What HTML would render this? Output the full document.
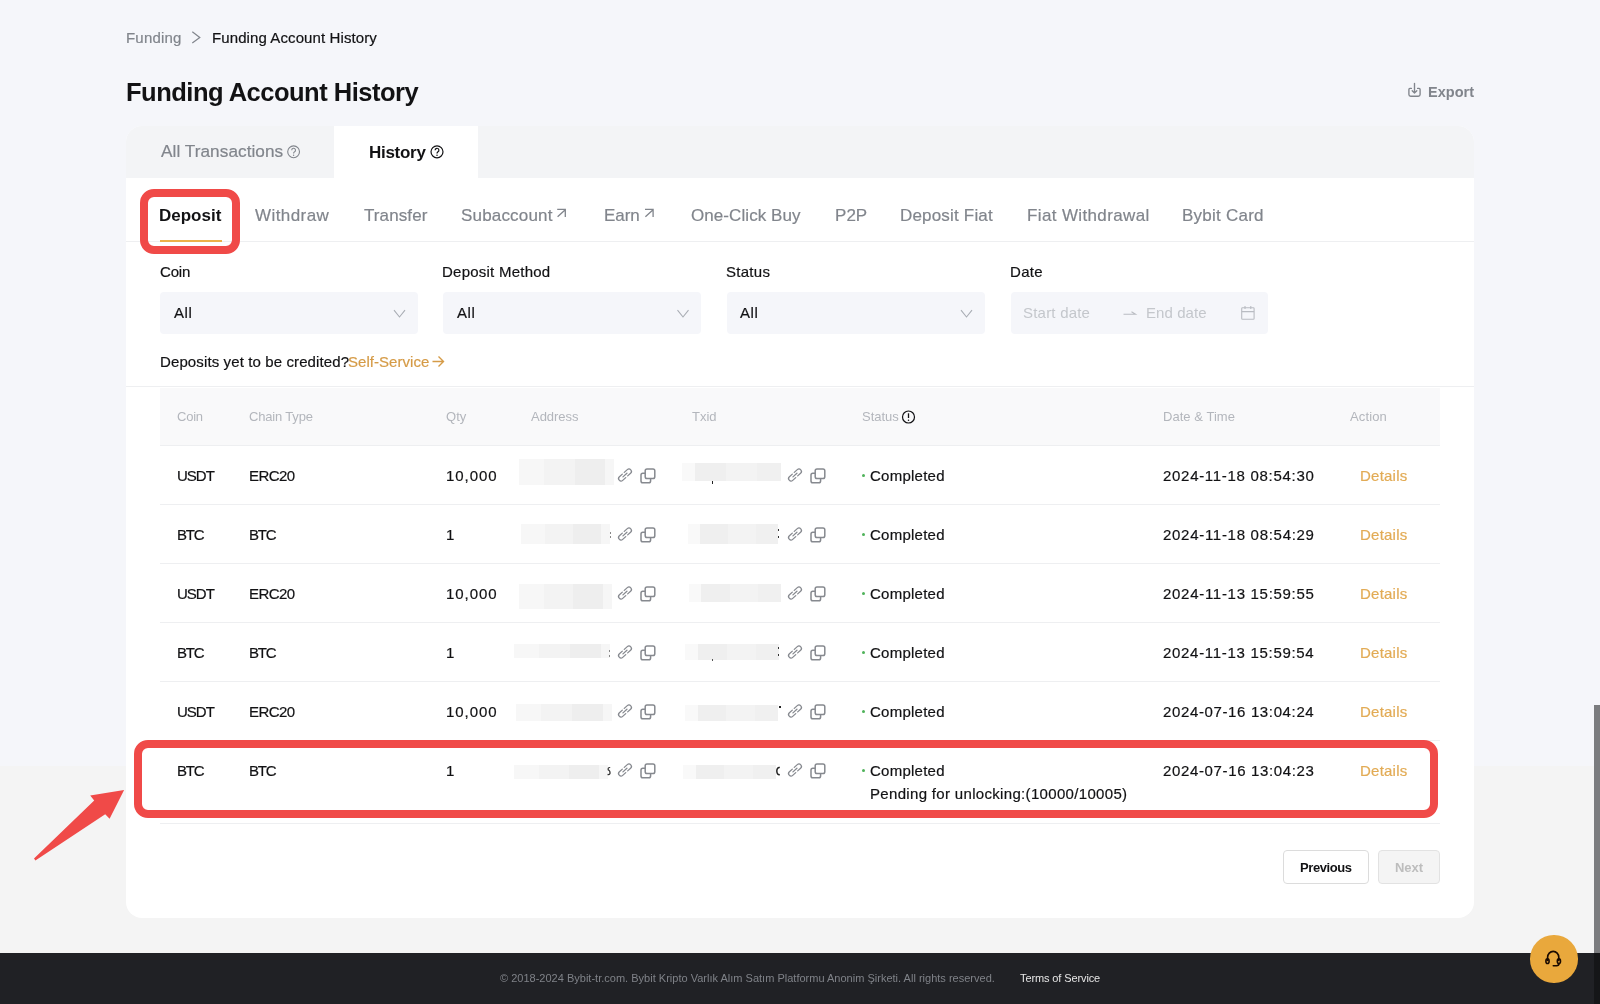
<!DOCTYPE html>
<html><head><meta charset="utf-8"><style>
*{margin:0;padding:0;box-sizing:border-box}
html,body{width:1600px;height:1004px;overflow:hidden}
body{position:relative;background:#f5f6fa;font-family:"Liberation Sans", sans-serif}
.t{position:absolute;white-space:nowrap;font-family:"Liberation Sans", sans-serif;-webkit-font-smoothing:antialiased}
body>*{will-change:transform}
.ic{position:absolute;overflow:visible}
.bl{position:absolute}
.hl{position:absolute;height:1px;background:#eeeff1}
.dot{position:absolute;width:3.4px;height:3.4px;border-radius:50%;background:#4fb25a}
</style></head><body>
<div style="position:absolute;left:0;top:766px;width:1600px;height:187px;background:#f4f4f4"></div>
<!-- card -->
<div style="position:absolute;left:126px;top:126px;width:1348px;height:792px;background:#fff;border-radius:16px;overflow:hidden">
  <div style="position:absolute;left:0;top:0;width:1348px;height:52px;background:#f3f4f6"></div>
  <div style="position:absolute;left:208px;top:0;width:144px;height:52px;background:#fff"></div>
</div>
<div class="hl" style="left:126px;width:1348px;top:241px;background:#eeeff1"></div>
<div style="position:absolute;left:160px;top:240px;width:61.5px;height:2px;background:#ecb14a"></div>
<!-- selects -->
<div style="position:absolute;left:160px;top:292px;width:258px;height:42px;background:#f5f6fa;border-radius:4px"></div>
<div style="position:absolute;left:443px;top:292px;width:258px;height:42px;background:#f5f6fa;border-radius:4px"></div>
<div style="position:absolute;left:727px;top:292px;width:258px;height:42px;background:#f5f6fa;border-radius:4px"></div>
<div style="position:absolute;left:1011px;top:292px;width:257px;height:42px;background:#f5f6fa;border-radius:4px"></div>
<svg class="ic" style="left:0;top:0" width="1600" height="1004" viewBox="0 0 1600 1004">
  <g fill="none" stroke="#a9adb4" stroke-width="1.1">
    <path d="M394 310.2 L399.5 317 L405 310.2"/><path d="M677.5 310.2 L683 317 L688.5 310.2"/><path d="M961 310.2 L966.5 317 L972 310.2"/>
  </g>
  <g fill="none" stroke="#b9bcc2" stroke-width="1.1">
    <path d="M1123.5 314.3 H1135.5 L1131.5 311.8"/>
    <rect x="1241.7" y="307.8" width="12.4" height="11.5" rx="0.8"/><path d="M1241.7 311.6 H1254.1 M1245 306 V309 M1250.8 306 V309"/>
  </g>
  <!-- breadcrumb chevron -->
  <path d="M192.3 31.8 L199.8 37.4 L192.3 43" fill="none" stroke="#81858c" stroke-width="1.2"/>
  <!-- export icon -->
  <g fill="none" stroke="#81858c" stroke-width="1.35" stroke-linecap="round" stroke-linejoin="round">
    <path d="M1411.4 88.4 H1409.9 A1 1 0 0 0 1408.9 89.4 V94.4 A1.8 1.8 0 0 0 1410.7 96.2 H1418.3 A1.8 1.8 0 0 0 1420.1 94.4 V89.4 A1 1 0 0 0 1419.1 88.4 H1417.6"/>
    <path d="M1414.5 83.3 V93 M1412.2 90.7 L1414.5 93 L1416.8 90.7"/>
  </g>
  <!-- question icons -->
  <g fill="none" stroke="#81858c" stroke-width="1.1"><circle cx="293.6" cy="151.8" r="5.9"/><path d="M291.7 150.2 A1.9 1.9 0 1 1 294.4 151.9 Q293.6 152.4 293.6 153.4"/></g>
  <circle cx="293.6" cy="155.3" r="0.7" fill="#81858c"/>
  <g fill="none" stroke="#121214" stroke-width="1.2"><circle cx="437" cy="151.8" r="6"/><path d="M435.1 150.2 A1.9 1.9 0 1 1 437.8 151.9 Q437 152.4 437 153.4"/></g>
  <circle cx="437" cy="155.3" r="0.75" fill="#121214"/>
  <!-- external arrows -->
  <g fill="none" stroke="#81858c" stroke-width="1.3"><path d="M557.6 216.8 L565 209.9 M557.2 209.3 H565.3 V217"/><path d="M645.4 216.8 L652.8 209.9 M645 209.3 H653.1 V217"/></g>
  <!-- self service arrow -->
  <g fill="none" stroke="#d59b47" stroke-width="1.4"><path d="M432.5 361.5 H443 M438.5 356.5 L443.5 361.5 L438.5 366.5"/></g>
</svg>
<div class="hl" style="left:126px;width:1348px;top:386px;background:#eeeff1"></div>
<!-- table header -->
<div style="position:absolute;left:160px;top:388px;width:1280px;height:58px;background:#f9f9fa;border-bottom:1px solid #eeeff1"></div>
<div class="hl" style="left:160px;width:1280px;top:504px"></div><div class="hl" style="left:160px;width:1280px;top:563px"></div><div class="hl" style="left:160px;width:1280px;top:622px"></div><div class="hl" style="left:160px;width:1280px;top:681px"></div><div class="hl" style="left:160px;width:1280px;top:740px"></div><div class="hl" style="left:160px;width:1280px;top:823px"></div>
<svg class="ic" style="left:0;top:0" width="1600" height="1004">  <!-- status info icon -->
  <g fill="none" stroke="#121214" stroke-width="1.2"><circle cx="908.5" cy="417" r="6"/></g>
  <path d="M908.5 413.3 V418" stroke="#121214" stroke-width="1.3"/><circle cx="908.5" cy="420.2" r="0.75" fill="#121214"/>
</svg>
<div class="bl" style="left:519px;top:459px;width:25px;height:26px;background:#f7f7f7"></div>
<div class="bl" style="left:544px;top:459px;width:31px;height:26px;background:#f3f3f3"></div>
<div class="bl" style="left:575px;top:459px;width:30px;height:26px;background:#eeeeee"></div>
<div class="bl" style="left:605px;top:459px;width:9px;height:26px;background:#f6f6f6"></div><div class="bl" style="left:682px;top:463px;width:13px;height:18px;background:#f9f9f9"></div>
<div class="bl" style="left:695px;top:463px;width:31px;height:18px;background:#efefef"></div>
<div class="bl" style="left:726px;top:463px;width:31px;height:18px;background:#f3f3f3"></div>
<div class="bl" style="left:757px;top:463px;width:24px;height:18px;background:#f0f0f0"></div><div class="bl" style="left:521px;top:524px;width:24px;height:20px;background:#f7f7f7"></div>
<div class="bl" style="left:545px;top:524px;width:28px;height:20px;background:#f3f3f3"></div>
<div class="bl" style="left:573px;top:524px;width:28px;height:20px;background:#eeeeee"></div>
<div class="bl" style="left:601px;top:524px;width:9px;height:20px;background:#f6f6f6"></div><div class="bl" style="left:688px;top:524px;width:12px;height:20px;background:#f9f9f9"></div>
<div class="bl" style="left:700px;top:524px;width:28px;height:20px;background:#efefef"></div>
<div class="bl" style="left:728px;top:524px;width:28px;height:20px;background:#f3f3f3"></div>
<div class="bl" style="left:756px;top:524px;width:22px;height:20px;background:#f0f0f0"></div><div class="bl" style="left:519px;top:584px;width:25px;height:25px;background:#f7f7f7"></div>
<div class="bl" style="left:544px;top:584px;width:29px;height:25px;background:#f3f3f3"></div>
<div class="bl" style="left:573px;top:584px;width:30px;height:25px;background:#eeeeee"></div>
<div class="bl" style="left:603px;top:584px;width:9px;height:25px;background:#f6f6f6"></div><div class="bl" style="left:689px;top:584px;width:12px;height:18px;background:#f9f9f9"></div>
<div class="bl" style="left:701px;top:584px;width:29px;height:18px;background:#efefef"></div>
<div class="bl" style="left:730px;top:584px;width:28px;height:18px;background:#f3f3f3"></div>
<div class="bl" style="left:758px;top:584px;width:23px;height:18px;background:#f0f0f0"></div><div class="bl" style="left:514px;top:644px;width:25px;height:14px;background:#f7f7f7"></div>
<div class="bl" style="left:539px;top:644px;width:31px;height:14px;background:#f3f3f3"></div>
<div class="bl" style="left:570px;top:644px;width:31px;height:14px;background:#eeeeee"></div>
<div class="bl" style="left:601px;top:644px;width:9px;height:14px;background:#f6f6f6"></div><div class="bl" style="left:685px;top:644px;width:13px;height:16px;background:#f9f9f9"></div>
<div class="bl" style="left:698px;top:644px;width:29px;height:16px;background:#efefef"></div>
<div class="bl" style="left:727px;top:644px;width:29px;height:16px;background:#f3f3f3"></div>
<div class="bl" style="left:756px;top:644px;width:23px;height:16px;background:#f0f0f0"></div><div class="bl" style="left:516px;top:704px;width:25px;height:17px;background:#f7f7f7"></div>
<div class="bl" style="left:541px;top:704px;width:31px;height:17px;background:#f3f3f3"></div>
<div class="bl" style="left:572px;top:704px;width:31px;height:17px;background:#eeeeee"></div>
<div class="bl" style="left:603px;top:704px;width:9px;height:17px;background:#f6f6f6"></div><div class="bl" style="left:685px;top:705px;width:13px;height:16px;background:#f9f9f9"></div>
<div class="bl" style="left:698px;top:705px;width:28px;height:16px;background:#efefef"></div>
<div class="bl" style="left:726px;top:705px;width:29px;height:16px;background:#f3f3f3"></div>
<div class="bl" style="left:755px;top:705px;width:23px;height:16px;background:#f0f0f0"></div><div class="bl" style="left:514px;top:765px;width:25px;height:14px;background:#f7f7f7"></div>
<div class="bl" style="left:539px;top:765px;width:30px;height:14px;background:#f3f3f3"></div>
<div class="bl" style="left:569px;top:765px;width:30px;height:14px;background:#eeeeee"></div>
<div class="bl" style="left:599px;top:765px;width:9px;height:14px;background:#f6f6f6"></div><div class="bl" style="left:683px;top:765px;width:13px;height:14px;background:#f9f9f9"></div>
<div class="bl" style="left:696px;top:765px;width:28px;height:14px;background:#efefef"></div>
<div class="bl" style="left:724px;top:765px;width:29px;height:14px;background:#f3f3f3"></div>
<div class="bl" style="left:753px;top:765px;width:23px;height:14px;background:#f0f0f0"></div>
<svg class="ic" style="left:617.05px;top:467.3px" width="16" height="16" viewBox="-8 -8 16 16"><g fill="none" stroke="#86898f" stroke-width="1.3" stroke-linecap="round" transform="rotate(-42)">
<path d="M1.2 -2.45 H5.3 A2.45 2.45 0 0 1 5.3 2.45 H1.4"/><path d="M-1.2 2.45 H-5.3 A2.45 2.45 0 0 1 -5.3 -2.45 H-1.4"/><path d="M-2.8 0 H2.6"/></g></svg><svg class="ic" style="left:639.5px;top:467.5px" width="16" height="16" viewBox="0 0 16 16"><g fill="none" stroke="#86898f" stroke-width="1.5" stroke-linejoin="round">
<rect x="5.2" y="0.9" width="9.6" height="9.6" rx="1.8"/><path d="M5.2 5.2 H2.8 A1.8 1.8 0 0 0 1 7 V13 A1.8 1.8 0 0 0 2.8 14.8 H8.8 A1.8 1.8 0 0 0 10.6 13 V10.5"/></g></svg><svg class="ic" style="left:787.1px;top:467.3px" width="16" height="16" viewBox="-8 -8 16 16"><g fill="none" stroke="#86898f" stroke-width="1.3" stroke-linecap="round" transform="rotate(-42)">
<path d="M1.2 -2.45 H5.3 A2.45 2.45 0 0 1 5.3 2.45 H1.4"/><path d="M-1.2 2.45 H-5.3 A2.45 2.45 0 0 1 -5.3 -2.45 H-1.4"/><path d="M-2.8 0 H2.6"/></g></svg><svg class="ic" style="left:810px;top:467.5px" width="16" height="16" viewBox="0 0 16 16"><g fill="none" stroke="#86898f" stroke-width="1.5" stroke-linejoin="round">
<rect x="5.2" y="0.9" width="9.6" height="9.6" rx="1.8"/><path d="M5.2 5.2 H2.8 A1.8 1.8 0 0 0 1 7 V13 A1.8 1.8 0 0 0 2.8 14.8 H8.8 A1.8 1.8 0 0 0 10.6 13 V10.5"/></g></svg><div class="dot" style="left:861.8px;top:474px"></div><svg class="ic" style="left:617.05px;top:526.3px" width="16" height="16" viewBox="-8 -8 16 16"><g fill="none" stroke="#86898f" stroke-width="1.3" stroke-linecap="round" transform="rotate(-42)">
<path d="M1.2 -2.45 H5.3 A2.45 2.45 0 0 1 5.3 2.45 H1.4"/><path d="M-1.2 2.45 H-5.3 A2.45 2.45 0 0 1 -5.3 -2.45 H-1.4"/><path d="M-2.8 0 H2.6"/></g></svg><svg class="ic" style="left:639.5px;top:526.5px" width="16" height="16" viewBox="0 0 16 16"><g fill="none" stroke="#86898f" stroke-width="1.5" stroke-linejoin="round">
<rect x="5.2" y="0.9" width="9.6" height="9.6" rx="1.8"/><path d="M5.2 5.2 H2.8 A1.8 1.8 0 0 0 1 7 V13 A1.8 1.8 0 0 0 2.8 14.8 H8.8 A1.8 1.8 0 0 0 10.6 13 V10.5"/></g></svg><svg class="ic" style="left:787.1px;top:526.3px" width="16" height="16" viewBox="-8 -8 16 16"><g fill="none" stroke="#86898f" stroke-width="1.3" stroke-linecap="round" transform="rotate(-42)">
<path d="M1.2 -2.45 H5.3 A2.45 2.45 0 0 1 5.3 2.45 H1.4"/><path d="M-1.2 2.45 H-5.3 A2.45 2.45 0 0 1 -5.3 -2.45 H-1.4"/><path d="M-2.8 0 H2.6"/></g></svg><svg class="ic" style="left:810px;top:526.5px" width="16" height="16" viewBox="0 0 16 16"><g fill="none" stroke="#86898f" stroke-width="1.5" stroke-linejoin="round">
<rect x="5.2" y="0.9" width="9.6" height="9.6" rx="1.8"/><path d="M5.2 5.2 H2.8 A1.8 1.8 0 0 0 1 7 V13 A1.8 1.8 0 0 0 2.8 14.8 H8.8 A1.8 1.8 0 0 0 10.6 13 V10.5"/></g></svg><div class="dot" style="left:861.8px;top:533px"></div><svg class="ic" style="left:617.05px;top:585.3px" width="16" height="16" viewBox="-8 -8 16 16"><g fill="none" stroke="#86898f" stroke-width="1.3" stroke-linecap="round" transform="rotate(-42)">
<path d="M1.2 -2.45 H5.3 A2.45 2.45 0 0 1 5.3 2.45 H1.4"/><path d="M-1.2 2.45 H-5.3 A2.45 2.45 0 0 1 -5.3 -2.45 H-1.4"/><path d="M-2.8 0 H2.6"/></g></svg><svg class="ic" style="left:639.5px;top:585.5px" width="16" height="16" viewBox="0 0 16 16"><g fill="none" stroke="#86898f" stroke-width="1.5" stroke-linejoin="round">
<rect x="5.2" y="0.9" width="9.6" height="9.6" rx="1.8"/><path d="M5.2 5.2 H2.8 A1.8 1.8 0 0 0 1 7 V13 A1.8 1.8 0 0 0 2.8 14.8 H8.8 A1.8 1.8 0 0 0 10.6 13 V10.5"/></g></svg><svg class="ic" style="left:787.1px;top:585.3px" width="16" height="16" viewBox="-8 -8 16 16"><g fill="none" stroke="#86898f" stroke-width="1.3" stroke-linecap="round" transform="rotate(-42)">
<path d="M1.2 -2.45 H5.3 A2.45 2.45 0 0 1 5.3 2.45 H1.4"/><path d="M-1.2 2.45 H-5.3 A2.45 2.45 0 0 1 -5.3 -2.45 H-1.4"/><path d="M-2.8 0 H2.6"/></g></svg><svg class="ic" style="left:810px;top:585.5px" width="16" height="16" viewBox="0 0 16 16"><g fill="none" stroke="#86898f" stroke-width="1.5" stroke-linejoin="round">
<rect x="5.2" y="0.9" width="9.6" height="9.6" rx="1.8"/><path d="M5.2 5.2 H2.8 A1.8 1.8 0 0 0 1 7 V13 A1.8 1.8 0 0 0 2.8 14.8 H8.8 A1.8 1.8 0 0 0 10.6 13 V10.5"/></g></svg><div class="dot" style="left:861.8px;top:592px"></div><svg class="ic" style="left:617.05px;top:644.3px" width="16" height="16" viewBox="-8 -8 16 16"><g fill="none" stroke="#86898f" stroke-width="1.3" stroke-linecap="round" transform="rotate(-42)">
<path d="M1.2 -2.45 H5.3 A2.45 2.45 0 0 1 5.3 2.45 H1.4"/><path d="M-1.2 2.45 H-5.3 A2.45 2.45 0 0 1 -5.3 -2.45 H-1.4"/><path d="M-2.8 0 H2.6"/></g></svg><svg class="ic" style="left:639.5px;top:644.5px" width="16" height="16" viewBox="0 0 16 16"><g fill="none" stroke="#86898f" stroke-width="1.5" stroke-linejoin="round">
<rect x="5.2" y="0.9" width="9.6" height="9.6" rx="1.8"/><path d="M5.2 5.2 H2.8 A1.8 1.8 0 0 0 1 7 V13 A1.8 1.8 0 0 0 2.8 14.8 H8.8 A1.8 1.8 0 0 0 10.6 13 V10.5"/></g></svg><svg class="ic" style="left:787.1px;top:644.3px" width="16" height="16" viewBox="-8 -8 16 16"><g fill="none" stroke="#86898f" stroke-width="1.3" stroke-linecap="round" transform="rotate(-42)">
<path d="M1.2 -2.45 H5.3 A2.45 2.45 0 0 1 5.3 2.45 H1.4"/><path d="M-1.2 2.45 H-5.3 A2.45 2.45 0 0 1 -5.3 -2.45 H-1.4"/><path d="M-2.8 0 H2.6"/></g></svg><svg class="ic" style="left:810px;top:644.5px" width="16" height="16" viewBox="0 0 16 16"><g fill="none" stroke="#86898f" stroke-width="1.5" stroke-linejoin="round">
<rect x="5.2" y="0.9" width="9.6" height="9.6" rx="1.8"/><path d="M5.2 5.2 H2.8 A1.8 1.8 0 0 0 1 7 V13 A1.8 1.8 0 0 0 2.8 14.8 H8.8 A1.8 1.8 0 0 0 10.6 13 V10.5"/></g></svg><div class="dot" style="left:861.8px;top:651px"></div><svg class="ic" style="left:617.05px;top:703.3px" width="16" height="16" viewBox="-8 -8 16 16"><g fill="none" stroke="#86898f" stroke-width="1.3" stroke-linecap="round" transform="rotate(-42)">
<path d="M1.2 -2.45 H5.3 A2.45 2.45 0 0 1 5.3 2.45 H1.4"/><path d="M-1.2 2.45 H-5.3 A2.45 2.45 0 0 1 -5.3 -2.45 H-1.4"/><path d="M-2.8 0 H2.6"/></g></svg><svg class="ic" style="left:639.5px;top:703.5px" width="16" height="16" viewBox="0 0 16 16"><g fill="none" stroke="#86898f" stroke-width="1.5" stroke-linejoin="round">
<rect x="5.2" y="0.9" width="9.6" height="9.6" rx="1.8"/><path d="M5.2 5.2 H2.8 A1.8 1.8 0 0 0 1 7 V13 A1.8 1.8 0 0 0 2.8 14.8 H8.8 A1.8 1.8 0 0 0 10.6 13 V10.5"/></g></svg><svg class="ic" style="left:787.1px;top:703.3px" width="16" height="16" viewBox="-8 -8 16 16"><g fill="none" stroke="#86898f" stroke-width="1.3" stroke-linecap="round" transform="rotate(-42)">
<path d="M1.2 -2.45 H5.3 A2.45 2.45 0 0 1 5.3 2.45 H1.4"/><path d="M-1.2 2.45 H-5.3 A2.45 2.45 0 0 1 -5.3 -2.45 H-1.4"/><path d="M-2.8 0 H2.6"/></g></svg><svg class="ic" style="left:810px;top:703.5px" width="16" height="16" viewBox="0 0 16 16"><g fill="none" stroke="#86898f" stroke-width="1.5" stroke-linejoin="round">
<rect x="5.2" y="0.9" width="9.6" height="9.6" rx="1.8"/><path d="M5.2 5.2 H2.8 A1.8 1.8 0 0 0 1 7 V13 A1.8 1.8 0 0 0 2.8 14.8 H8.8 A1.8 1.8 0 0 0 10.6 13 V10.5"/></g></svg><div class="dot" style="left:861.8px;top:710px"></div><svg class="ic" style="left:617.05px;top:762.3px" width="16" height="16" viewBox="-8 -8 16 16"><g fill="none" stroke="#86898f" stroke-width="1.3" stroke-linecap="round" transform="rotate(-42)">
<path d="M1.2 -2.45 H5.3 A2.45 2.45 0 0 1 5.3 2.45 H1.4"/><path d="M-1.2 2.45 H-5.3 A2.45 2.45 0 0 1 -5.3 -2.45 H-1.4"/><path d="M-2.8 0 H2.6"/></g></svg><svg class="ic" style="left:639.5px;top:762.5px" width="16" height="16" viewBox="0 0 16 16"><g fill="none" stroke="#86898f" stroke-width="1.5" stroke-linejoin="round">
<rect x="5.2" y="0.9" width="9.6" height="9.6" rx="1.8"/><path d="M5.2 5.2 H2.8 A1.8 1.8 0 0 0 1 7 V13 A1.8 1.8 0 0 0 2.8 14.8 H8.8 A1.8 1.8 0 0 0 10.6 13 V10.5"/></g></svg><svg class="ic" style="left:787.1px;top:762.3px" width="16" height="16" viewBox="-8 -8 16 16"><g fill="none" stroke="#86898f" stroke-width="1.3" stroke-linecap="round" transform="rotate(-42)">
<path d="M1.2 -2.45 H5.3 A2.45 2.45 0 0 1 5.3 2.45 H1.4"/><path d="M-1.2 2.45 H-5.3 A2.45 2.45 0 0 1 -5.3 -2.45 H-1.4"/><path d="M-2.8 0 H2.6"/></g></svg><svg class="ic" style="left:810px;top:762.5px" width="16" height="16" viewBox="0 0 16 16"><g fill="none" stroke="#86898f" stroke-width="1.5" stroke-linejoin="round">
<rect x="5.2" y="0.9" width="9.6" height="9.6" rx="1.8"/><path d="M5.2 5.2 H2.8 A1.8 1.8 0 0 0 1 7 V13 A1.8 1.8 0 0 0 2.8 14.8 H8.8 A1.8 1.8 0 0 0 10.6 13 V10.5"/></g></svg><div class="dot" style="left:861.8px;top:769px"></div>
<div class="bl" style="left:711.5px;top:481px;width:1.3px;height:2.5px;background:#222"></div><div class="bl" style="left:609.5px;top:532px;width:1.3px;height:1.5px;background:#888"></div><div class="bl" style="left:609.5px;top:536px;width:1.3px;height:1.5px;background:#888"></div><div class="bl" style="left:777.5px;top:529px;width:1.4px;height:2px;background:#333"></div><div class="bl" style="left:777.5px;top:536px;width:1.4px;height:2px;background:#333"></div><div class="bl" style="left:609px;top:650px;width:1.3px;height:1.5px;background:#888"></div><div class="bl" style="left:609px;top:655px;width:1.3px;height:1.5px;background:#888"></div><div class="bl" style="left:777.5px;top:647px;width:1.4px;height:2px;background:#333"></div><div class="bl" style="left:777.5px;top:654px;width:1.4px;height:2px;background:#333"></div><div class="bl" style="left:711.5px;top:659px;width:1.3px;height:1.5px;background:#555"></div><div class="bl" style="left:778.5px;top:705.5px;width:2px;height:1.6px;background:#222"></div><svg class="ic" style="left:0;top:0" width="1600" height="1004"><path d="M610.2 767.5 Q607.8 767.3 608.2 769.8 Q610.4 771 610 773.6 Q609 775 607.6 774.4" fill="none" stroke="#333" stroke-width="1.2"/><path d="M779.8 767.6 Q777 767 776.8 771 Q777 775 779.8 774.6" fill="none" stroke="#222" stroke-width="1.5"/></svg>
<!-- pagination -->
<div style="position:absolute;left:1283px;top:850px;width:86px;height:34px;border:1px solid #dcdcdc;border-radius:4px;background:#fff"></div>
<div style="position:absolute;left:1378px;top:850px;width:62px;height:34px;border:1px solid #e2e2e2;border-radius:4px;background:#f4f4f4"></div>
<div class="t" style="left:125.55px;top:29.70px;font-size:15.00px;line-height:15.00px;color:#81858c;letter-spacing:0.200px;-webkit-text-stroke:0.2px #81858c;">Funding</div>
<div class="t" style="left:211.80px;top:29.60px;font-size:15.00px;line-height:15.00px;color:#121214;letter-spacing:0.100px;-webkit-text-stroke:0.2px #121214;">Funding Account History</div>
<div class="t" style="left:125.84px;top:79.81px;font-size:25.50px;line-height:25.50px;color:#121214;letter-spacing:-0.500px;font-weight:700;">Funding Account History</div>
<div class="t" style="left:1428.06px;top:84.63px;font-size:14.50px;line-height:14.50px;color:#81858c;letter-spacing:0.019px;font-weight:700;">Export</div>
<div class="t" style="left:160.50px;top:143.44px;font-size:17.20px;line-height:17.20px;color:#81858c;letter-spacing:0.058px;-webkit-text-stroke:0.2px #81858c;">All Transactions</div>
<div class="t" style="left:368.69px;top:143.81px;font-size:17.00px;line-height:17.00px;color:#121214;letter-spacing:-0.279px;font-weight:700;">History</div>
<div class="t" style="left:158.90px;top:207.41px;font-size:17.00px;line-height:17.00px;color:#121214;letter-spacing:-0.005px;font-weight:700;">Deposit</div>
<div class="t" style="left:255.41px;top:207.41px;font-size:17.00px;line-height:17.00px;color:#81858c;letter-spacing:0.421px;-webkit-text-stroke:0.2px #81858c;">Withdraw</div>
<div class="t" style="left:363.91px;top:207.41px;font-size:17.00px;line-height:17.00px;color:#81858c;letter-spacing:0.100px;-webkit-text-stroke:0.2px #81858c;">Transfer</div>
<div class="t" style="left:461.24px;top:207.41px;font-size:17.00px;line-height:17.00px;color:#81858c;letter-spacing:0.177px;-webkit-text-stroke:0.2px #81858c;">Subaccount</div>
<div class="t" style="left:604.14px;top:207.41px;font-size:17.00px;line-height:17.00px;color:#81858c;letter-spacing:-0.052px;-webkit-text-stroke:0.2px #81858c;">Earn</div>
<div class="t" style="left:691.24px;top:207.41px;font-size:17.00px;line-height:17.00px;color:#81858c;letter-spacing:0.074px;-webkit-text-stroke:0.2px #81858c;">One-Click Buy</div>
<div class="t" style="left:834.89px;top:207.41px;font-size:17.00px;line-height:17.00px;color:#81858c;letter-spacing:0.040px;-webkit-text-stroke:0.2px #81858c;">P2P</div>
<div class="t" style="left:899.89px;top:207.41px;font-size:17.00px;line-height:17.00px;color:#81858c;letter-spacing:0.182px;-webkit-text-stroke:0.2px #81858c;">Deposit Fiat</div>
<div class="t" style="left:1026.89px;top:207.41px;font-size:17.00px;line-height:17.00px;color:#81858c;letter-spacing:0.363px;-webkit-text-stroke:0.2px #81858c;">Fiat Withdrawal</div>
<div class="t" style="left:1181.64px;top:207.41px;font-size:17.00px;line-height:17.00px;color:#81858c;letter-spacing:0.240px;-webkit-text-stroke:0.2px #81858c;">Bybit Card</div>
<div class="t" style="left:159.85px;top:263.80px;font-size:15.00px;line-height:15.00px;color:#121214;letter-spacing:-0.167px;-webkit-text-stroke:0.2px #121214;">Coin</div>
<div class="t" style="left:442.40px;top:263.80px;font-size:15.00px;line-height:15.00px;color:#121214;letter-spacing:0.238px;-webkit-text-stroke:0.2px #121214;">Deposit Method</div>
<div class="t" style="left:726.33px;top:263.80px;font-size:15.00px;line-height:15.00px;color:#121214;letter-spacing:0.275px;-webkit-text-stroke:0.2px #121214;">Status</div>
<div class="t" style="left:1009.70px;top:263.80px;font-size:15.00px;line-height:15.00px;color:#121214;letter-spacing:0.342px;-webkit-text-stroke:0.2px #121214;">Date</div>
<div class="t" style="left:173.50px;top:304.80px;font-size:15.00px;line-height:15.00px;color:#121214;letter-spacing:0.563px;-webkit-text-stroke:0.2px #121214;">All</div>
<div class="t" style="left:456.70px;top:304.80px;font-size:15.00px;line-height:15.00px;color:#121214;letter-spacing:0.563px;-webkit-text-stroke:0.2px #121214;">All</div>
<div class="t" style="left:740.10px;top:304.80px;font-size:15.00px;line-height:15.00px;color:#121214;letter-spacing:0.563px;-webkit-text-stroke:0.2px #121214;">All</div>
<div class="t" style="left:1022.93px;top:304.80px;font-size:15.00px;line-height:15.00px;color:#c4c7cc;letter-spacing:0.214px;">Start date</div>
<div class="t" style="left:1146.30px;top:304.80px;font-size:15.00px;line-height:15.00px;color:#c4c7cc;letter-spacing:0.082px;">End date</div>
<div class="t" style="left:159.50px;top:353.60px;font-size:15.00px;line-height:15.00px;color:#121214;letter-spacing:0.115px;-webkit-text-stroke:0.2px #121214;">Deposits yet to be credited?</div>
<div class="t" style="left:347.93px;top:353.60px;font-size:15.00px;line-height:15.00px;color:#d59b47;letter-spacing:0.045px;-webkit-text-stroke:0.2px #d59b47;">Self-Service</div>
<div class="t" style="left:177.10px;top:410.25px;font-size:13.00px;line-height:13.00px;color:#b3b6bc;letter-spacing:-0.240px;">Coin</div>
<div class="t" style="left:249.10px;top:410.25px;font-size:13.00px;line-height:13.00px;color:#b3b6bc;letter-spacing:-0.171px;">Chain Type</div>
<div class="t" style="left:445.67px;top:410.25px;font-size:13.00px;line-height:13.00px;color:#b3b6bc;letter-spacing:0.060px;">Qty</div>
<div class="t" style="left:530.60px;top:410.25px;font-size:13.00px;line-height:13.00px;color:#b3b6bc;letter-spacing:-0.042px;">Address</div>
<div class="t" style="left:691.64px;top:410.25px;font-size:13.00px;line-height:13.00px;color:#b3b6bc;letter-spacing:-0.022px;">Txid</div>
<div class="t" style="left:861.62px;top:410.25px;font-size:13.00px;line-height:13.00px;color:#b3b6bc;letter-spacing:-0.043px;">Status</div>
<div class="t" style="left:1162.66px;top:410.25px;font-size:13.00px;line-height:13.00px;color:#b3b6bc;letter-spacing:0.042px;">Date &amp; Time</div>
<div class="t" style="left:1350.40px;top:410.25px;font-size:13.00px;line-height:13.00px;color:#b3b6bc;letter-spacing:0.141px;">Action</div>
<div class="t" style="left:176.57px;top:467.80px;font-size:15.00px;line-height:15.00px;color:#121214;letter-spacing:-0.992px;-webkit-text-stroke:0.2px #121214;">USDT</div>
<div class="t" style="left:248.80px;top:467.80px;font-size:15.00px;line-height:15.00px;color:#121214;letter-spacing:-0.537px;-webkit-text-stroke:0.2px #121214;">ERC20</div>
<div class="t" style="left:445.68px;top:467.80px;font-size:15.00px;line-height:15.00px;color:#121214;letter-spacing:0.930px;-webkit-text-stroke:0.2px #121214;">10,000</div>
<div class="t" style="left:870.25px;top:467.80px;font-size:15.00px;line-height:15.00px;color:#121214;letter-spacing:0.250px;-webkit-text-stroke:0.2px #121214;">Completed</div>
<div class="t" style="left:1163.05px;top:467.80px;font-size:15.00px;line-height:15.00px;color:#121214;letter-spacing:0.701px;-webkit-text-stroke:0.2px #121214;">2024-11-18 08:54:30</div>
<div class="t" style="left:1360.10px;top:467.80px;font-size:15.00px;line-height:15.00px;color:#e2ab55;letter-spacing:0.233px;-webkit-text-stroke:0.2px #e2ab55;">Details</div>
<div class="t" style="left:176.50px;top:526.80px;font-size:15.00px;line-height:15.00px;color:#121214;letter-spacing:-1.237px;-webkit-text-stroke:0.2px #121214;">BTC</div>
<div class="t" style="left:248.80px;top:526.80px;font-size:15.00px;line-height:15.00px;color:#121214;letter-spacing:-1.237px;-webkit-text-stroke:0.2px #121214;">BTC</div>
<div class="t" style="left:445.68px;top:526.80px;font-size:15.00px;line-height:15.00px;color:#121214;letter-spacing:1.475px;-webkit-text-stroke:0.2px #121214;">1</div>
<div class="t" style="left:870.25px;top:526.80px;font-size:15.00px;line-height:15.00px;color:#121214;letter-spacing:0.250px;-webkit-text-stroke:0.2px #121214;">Completed</div>
<div class="t" style="left:1163.05px;top:526.80px;font-size:15.00px;line-height:15.00px;color:#121214;letter-spacing:0.710px;-webkit-text-stroke:0.2px #121214;">2024-11-18 08:54:29</div>
<div class="t" style="left:1360.10px;top:526.80px;font-size:15.00px;line-height:15.00px;color:#e2ab55;letter-spacing:0.233px;-webkit-text-stroke:0.2px #e2ab55;">Details</div>
<div class="t" style="left:176.57px;top:585.80px;font-size:15.00px;line-height:15.00px;color:#121214;letter-spacing:-0.992px;-webkit-text-stroke:0.2px #121214;">USDT</div>
<div class="t" style="left:248.80px;top:585.80px;font-size:15.00px;line-height:15.00px;color:#121214;letter-spacing:-0.537px;-webkit-text-stroke:0.2px #121214;">ERC20</div>
<div class="t" style="left:445.68px;top:585.80px;font-size:15.00px;line-height:15.00px;color:#121214;letter-spacing:0.930px;-webkit-text-stroke:0.2px #121214;">10,000</div>
<div class="t" style="left:870.25px;top:585.80px;font-size:15.00px;line-height:15.00px;color:#121214;letter-spacing:0.250px;-webkit-text-stroke:0.2px #121214;">Completed</div>
<div class="t" style="left:1163.05px;top:585.80px;font-size:15.00px;line-height:15.00px;color:#121214;letter-spacing:0.706px;-webkit-text-stroke:0.2px #121214;">2024-11-13 15:59:55</div>
<div class="t" style="left:1360.10px;top:585.80px;font-size:15.00px;line-height:15.00px;color:#e2ab55;letter-spacing:0.233px;-webkit-text-stroke:0.2px #e2ab55;">Details</div>
<div class="t" style="left:176.50px;top:644.80px;font-size:15.00px;line-height:15.00px;color:#121214;letter-spacing:-1.237px;-webkit-text-stroke:0.2px #121214;">BTC</div>
<div class="t" style="left:248.80px;top:644.80px;font-size:15.00px;line-height:15.00px;color:#121214;letter-spacing:-1.237px;-webkit-text-stroke:0.2px #121214;">BTC</div>
<div class="t" style="left:445.68px;top:644.80px;font-size:15.00px;line-height:15.00px;color:#121214;letter-spacing:1.475px;-webkit-text-stroke:0.2px #121214;">1</div>
<div class="t" style="left:870.25px;top:644.80px;font-size:15.00px;line-height:15.00px;color:#121214;letter-spacing:0.250px;-webkit-text-stroke:0.2px #121214;">Completed</div>
<div class="t" style="left:1163.05px;top:644.80px;font-size:15.00px;line-height:15.00px;color:#121214;letter-spacing:0.697px;-webkit-text-stroke:0.2px #121214;">2024-11-13 15:59:54</div>
<div class="t" style="left:1360.10px;top:644.80px;font-size:15.00px;line-height:15.00px;color:#e2ab55;letter-spacing:0.233px;-webkit-text-stroke:0.2px #e2ab55;">Details</div>
<div class="t" style="left:176.57px;top:703.80px;font-size:15.00px;line-height:15.00px;color:#121214;letter-spacing:-0.992px;-webkit-text-stroke:0.2px #121214;">USDT</div>
<div class="t" style="left:248.80px;top:703.80px;font-size:15.00px;line-height:15.00px;color:#121214;letter-spacing:-0.537px;-webkit-text-stroke:0.2px #121214;">ERC20</div>
<div class="t" style="left:445.68px;top:703.80px;font-size:15.00px;line-height:15.00px;color:#121214;letter-spacing:0.930px;-webkit-text-stroke:0.2px #121214;">10,000</div>
<div class="t" style="left:870.25px;top:703.80px;font-size:15.00px;line-height:15.00px;color:#121214;letter-spacing:0.250px;-webkit-text-stroke:0.2px #121214;">Completed</div>
<div class="t" style="left:1163.05px;top:703.80px;font-size:15.00px;line-height:15.00px;color:#121214;letter-spacing:0.635px;-webkit-text-stroke:0.2px #121214;">2024-07-16 13:04:24</div>
<div class="t" style="left:1360.10px;top:703.80px;font-size:15.00px;line-height:15.00px;color:#e2ab55;letter-spacing:0.233px;-webkit-text-stroke:0.2px #e2ab55;">Details</div>
<div class="t" style="left:176.50px;top:762.50px;font-size:15.00px;line-height:15.00px;color:#121214;letter-spacing:-1.237px;-webkit-text-stroke:0.2px #121214;">BTC</div>
<div class="t" style="left:248.80px;top:762.50px;font-size:15.00px;line-height:15.00px;color:#121214;letter-spacing:-1.237px;-webkit-text-stroke:0.2px #121214;">BTC</div>
<div class="t" style="left:445.68px;top:762.50px;font-size:15.00px;line-height:15.00px;color:#121214;letter-spacing:1.475px;-webkit-text-stroke:0.2px #121214;">1</div>
<div class="t" style="left:870.25px;top:762.50px;font-size:15.00px;line-height:15.00px;color:#121214;letter-spacing:0.250px;-webkit-text-stroke:0.2px #121214;">Completed</div>
<div class="t" style="left:1163.05px;top:762.50px;font-size:15.00px;line-height:15.00px;color:#121214;letter-spacing:0.643px;-webkit-text-stroke:0.2px #121214;">2024-07-16 13:04:23</div>
<div class="t" style="left:1360.10px;top:762.50px;font-size:15.00px;line-height:15.00px;color:#e2ab55;letter-spacing:0.233px;-webkit-text-stroke:0.2px #e2ab55;">Details</div>
<div class="t" style="left:869.60px;top:786.30px;font-size:15.00px;line-height:15.00px;color:#121214;letter-spacing:0.326px;-webkit-text-stroke:0.2px #121214;">Pending for unlocking:(10000/10005)</div>
<div class="t" style="left:1299.75px;top:861.00px;font-size:13.00px;line-height:13.00px;color:#121214;letter-spacing:-0.409px;font-weight:700;">Previous</div><div class="t" style="left:1394.56px;top:861.00px;font-size:13.00px;line-height:13.00px;color:#bdbdbd;letter-spacing:-0.057px;font-weight:700;">Next</div>
<!-- red highlight boxes -->
<div style="position:absolute;left:140px;top:189px;width:100px;height:65px;border:8.4px solid #f04a48;border-radius:14px"></div>
<div style="position:absolute;left:134px;top:740px;width:1304px;height:78px;border:8.3px solid #f04a48;border-radius:14px"></div>
<svg class="ic" style="left:0;top:0" width="1600" height="1004"><polygon points="34,858.5 94.2,800.4 90.2,795.4 124.1,789.9 109.6,818.8 105.2,814.3 35.4,860.5" fill="#f04a48"/></svg>
<!-- footer -->
<div style="position:absolute;left:0;top:953px;width:1600px;height:51px;background:#202125"></div>
<div style="position:absolute;left:1594px;top:705px;width:6px;height:248px;background:#7b7c7f"></div>
<div style="position:absolute;left:1594px;top:953px;width:6px;height:51px;background:#151618"></div>
<div class="t" style="left:500.03px;top:973.09px;font-size:11.00px;line-height:11.00px;color:#7f8288;letter-spacing:0.009px;">© 2018-2024 Bybit-tr.com. Bybit Kripto Varlık Alım Satım Platformu Anonim Şirketi. All rights reserved.</div>
<div class="t" style="left:1019.98px;top:973.09px;font-size:11.00px;line-height:11.00px;color:#e6e6e6;letter-spacing:-0.112px;">Terms of Service</div>
<div style="position:absolute;left:1530px;top:935px;width:47.5px;height:47.5px;border-radius:50%;background:#e9a83c"></div>
<svg class="ic" style="left:1530px;top:935px" width="48" height="48" viewBox="0 0 48 48">
  <g fill="none" stroke="#1a0a00" stroke-width="1.6" stroke-linecap="round">
    <path d="M17.6 25.5 V22.4 A5.6 6 0 0 1 28.8 22.4 V25.5"/>
    <ellipse cx="17.5" cy="26.2" rx="1.6" ry="2.3"/><ellipse cx="28.9" cy="26.2" rx="1.6" ry="2.3"/>
    <path d="M29 28.5 Q29 30.7 26.6 30.7 H23.3"/>
  </g>
</svg>
</body></html>
